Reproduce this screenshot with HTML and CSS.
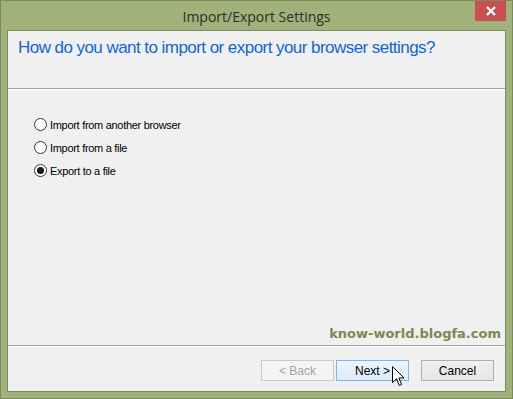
FILE: index.html
```html
<!DOCTYPE html>
<html>
<head>
<meta charset="utf-8">
<link rel="stylesheet" href="styles.css">
</head>
<body>
<div class="window">
  <div class="titlebar">
    <div class="title">Import/Export Settings</div>
    <div class="close"><svg width="12" height="12" viewBox="0 0 12 12"><path d="M2 2 L10 10 M10 2 L2 10" stroke="#fff" stroke-width="2.2" fill="none"/></svg></div>
  </div>
  <div class="panel">
    <div class="header">How do you want to import or export your browser settings?</div>
    <div class="body">
      <div class="options">
        <label class="option"><span class="radio"></span>Import from another browser</label>
        <label class="option"><span class="radio"></span>Import from a file</label>
        <label class="option"><span class="radio checked"></span>Export to a file</label>
      </div>
      <div class="watermark">know-world.blogfa.com</div>
    </div>
    <div class="footer">
      <div class="btn disabled">&lt; Back</div>
      <div class="btn default">Next &gt;
        <svg class="cursor" width="13" height="21" viewBox="0 0 13 21"><path d="M0.5 0.5 L0.5 16.5 L4.5 12.7 L7.3 19.5 L9.6 18.5 L6.9 12 L12 12 Z" fill="#fff" stroke="#000" stroke-width="1" stroke-linejoin="miter"/></svg>
      </div>
      <div class="btn cancel">Cancel</div>
    </div>
  </div>
</div>
</body>
</html>
```
FILE: styles.css
```css
html, body {
  margin: 0;
  padding: 0;
}
body {
  width: 513px;
  height: 399px;
  overflow: hidden;
  font-family: "Liberation Sans", Arial, sans-serif;
}
.window {
  width: 513px;
  height: 399px;
  box-sizing: border-box;
  border: 1px solid #7b8b5c;
  background: #a0b17b;
  display: flex;
  flex-direction: column;
}
.titlebar {
  height: 29px;
  flex: none;
  position: relative;
  display: flex;
  align-items: center;
  justify-content: center;
}
.title {
  font-family: "Open Sans", "Noto Sans", sans-serif;
  font-size: 14px;
  color: #2c2f2a;
  margin-top: 1px;
}
.close {
  position: absolute;
  right: 6px;
  top: 0;
  width: 31px;
  height: 20px;
  background: #c75050;
  display: flex;
  align-items: center;
  justify-content: center;
}
.panel {
  flex: 1;
  margin: 0 6px 6px 6px;
  border: 1px solid #7b8b5c;
  background: #f0f0f0;
  display: flex;
  flex-direction: column;
}
.header {
  height: 58px;
  flex: none;
  box-sizing: border-box;
  padding: 7px 0 0 10px;
  font-size: 17px;
  letter-spacing: -0.55px;
  color: #1464d6;
  border-bottom: 1px solid #a0a0a0;
  box-shadow: 0 1px 0 #ffffff;
}
.body {
  flex: 1;
  display: flex;
  flex-direction: column;
  padding-top: 24px;
}
.options {
  display: flex;
  flex-direction: column;
  padding-left: 26px;
}
.option {
  height: 23px;
  display: flex;
  align-items: center;
  font-size: 11px;
  letter-spacing: -0.3px;
  color: #000;
}
.radio {
  width: 11px;
  height: 11px;
  border: 1px solid #333;
  border-radius: 50%;
  background: #fff;
  margin-right: 3px;
  position: relative;
  flex: none;
}
.radio.checked::after {
  content: "";
  position: absolute;
  left: 2px;
  top: 2px;
  width: 7px;
  height: 7px;
  border-radius: 50%;
  background: #1a1a1a;
}
.watermark {
  margin-top: auto;
  align-self: flex-end;
  padding: 0 4px 4px 0;
  font-family: "DejaVu Sans", Verdana, sans-serif;
  font-weight: bold;
  font-size: 13px;
  color: #788a55;
}
.footer {
  height: 46px;
  flex: none;
  box-sizing: border-box;
  border-top: 1px solid #a0a0a0;
  box-shadow: inset 0 1px 0 #ffffff;
  display: flex;
  justify-content: flex-end;
  padding: 14px 11px 0 0;
}
.btn {
  width: 73px;
  height: 21px;
  box-sizing: border-box;
  border: 1px solid #adadad;
  background: linear-gradient(#f0f0f0, #e5e5e5);
  font-size: 12px;
  color: #000;
  display: flex;
  align-items: center;
  justify-content: center;
  position: relative;
}
.btn.disabled {
  border-color: #c9c9c9;
  background: #f4f4f4;
  color: #a3a3a3;
}
.btn.default {
  margin-left: 2px;
  border-color: #7eb4ea;
  background: linear-gradient(#ecf4fc, #dcecfc);
}
.btn.cancel {
  margin-left: 12px;
}
.cursor {
  position: absolute;
  left: 55px;
  top: 5px;
}
```
